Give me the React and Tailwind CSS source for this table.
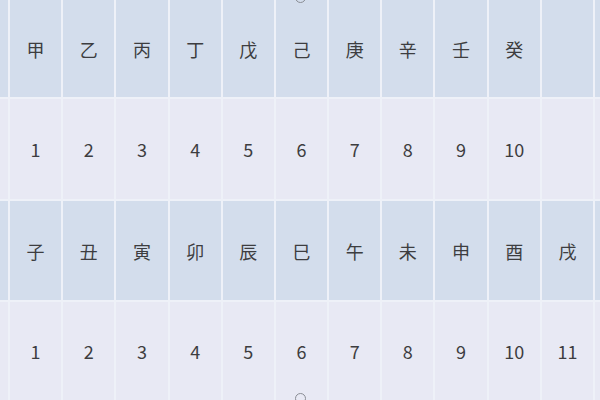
const stems = ["甲", "乙", "丙", "丁", "戊", "己", "庚", "辛", "壬", "癸", ""];
const stemNums = ["1", "2", "3", "4", "5", "6", "7", "8", "9", "10", ""];
const branches = ["子", "丑", "寅", "卯", "辰", "巳", "午", "未", "申", "酉", "戌"];
const branchNums = ["1", "2", "3", "4", "5", "6", "7", "8", "9", "10", "11"];

const rows = [
  { cells: stems, bg: "bg-[#d3ddec]" },
  { cells: stemNums, bg: "bg-[#e8e9f4]" },
  { cells: branches, bg: "bg-[#d3ddec]" },
  { cells: branchNums, bg: "bg-[#e8e9f4]" },
];

export default function App() {
  return (
    <div className="relative h-[400px] w-[600px] overflow-hidden bg-[#eef1f8] font-['Noto_Sans_CJK_JP','Noto_Sans',sans-serif] text-[18px] text-[#3d3d40]">
      <div className="grid h-full grid-cols-[8px_repeat(11,1fr)_5px] grid-rows-[97px_100px_99px_98px] gap-x-[2px] gap-y-[2px]">
        {rows.map((row, r) => [
          <div key={`${r}-l`} className={row.bg} />,
          ...row.cells.map((c, i) => (
            <div
              key={`${r}-${i}`}
              className={`${row.bg} flex items-center justify-center pt-[1px]`}
            >
              {c}
            </div>
          )),
          <div key={`${r}-r`} className={row.bg} />,
        ])}
      </div>
      {/* watermark rings cut by the frame */}
      <div className="absolute left-[295px] top-[-8px] h-[11px] w-[11px] rounded-full border-[1.5px] border-[#8a8d94]" />
      <div className="absolute left-[295px] top-[393px] h-[11px] w-[11px] rounded-full border-[1.5px] border-[#8a8d94]" />
    </div>
  );
}
